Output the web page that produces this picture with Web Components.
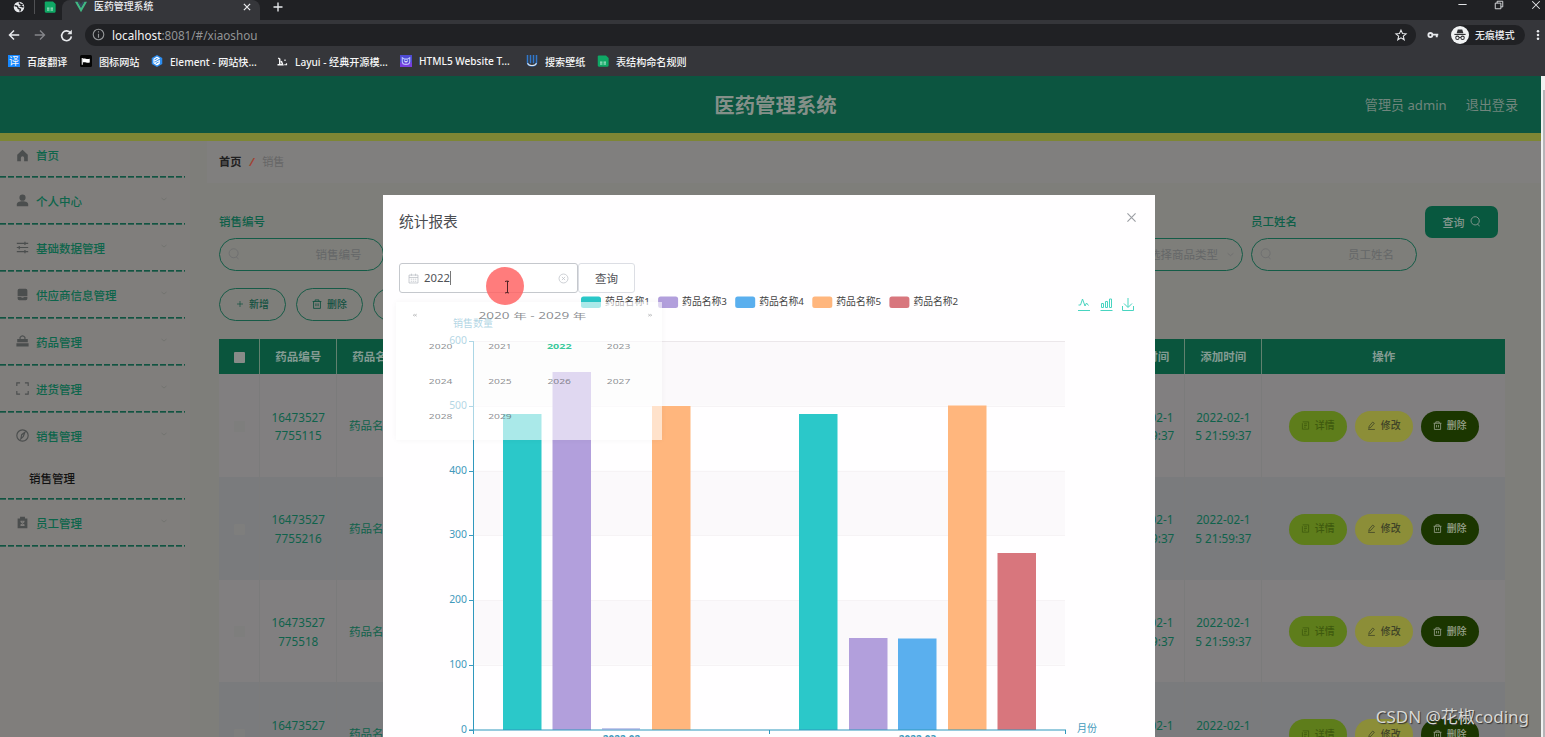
<!DOCTYPE html>
<html lang="zh-CN">
<head>
<meta charset="utf-8">
<title>医药管理系统</title>
<style>
html,body{margin:0;height:100%;overflow:hidden}
body{font-family:"Noto Sans","Noto Sans CJK SC",sans-serif;font-size:11.5px;background:#7f7e7c}
</style>
</head>
<body>
<med-screen></med-screen>
<script>
const define=(name,css,html)=>customElements.define(name,class extends HTMLElement{
  constructor(){
    super();
    const root=this.attachShadow({mode:'open'});
    root.innerHTML='<style>*{box-sizing:border-box}'+css+'</style>'+(typeof html==='function'?html(this):html);
  }
});
const ICONS={
  globe:'<circle cx="8" cy="8" r="7" fill="#e8eaed" stroke="none"/><path d="M2 6l4 1 1 3 3 1-1 3M8 2l1 2 3 1-2 2 4 1" stroke="#202124" stroke-width="1.800" fill="none"/>',
  sheet:'<path d="M1 2q0-1.500 1.500-1.500H12L15.500 4v10q0 1.500-1.500 1.500H2.500Q1 15.500 1 14z" fill="#0fa865" stroke="none"/><path d="M4 9.500h3.300M8.700 9.500H12M4 12h3.300M8.700 12H12" stroke="#d8f5e6" stroke-width="1.200"/>',
  vue:'<path d="M0 1h3.4L8 9l4.600-8H16L8 15z" fill="#41b883" stroke="none"/><path d="M3.400 1H6l2 3.500L10 1h2.600L8 9z" fill="#35495e" stroke="none"/>',
  close:'<path d="M3 3l10 10M13 3L3 13"/>',
  plus:'<path d="M8 2v12M2 8h12"/>',
  back:'<path d="M15 8H2M8 2L2 8l6 6" stroke-width="2"/>',
  forward:'<path d="M1 8h13M8 2l6 6-6 6" stroke-width="1.800"/>',
  reload:'<path d="M13 5a6 6 0 1 0 1 4" stroke-width="2"/><path d="M14.500 1v5.500H9z" fill="currentColor" stroke="none"/>',
  info:'<circle cx="8" cy="8" r="6.500"/><path d="M8 7v5M8 4v1.500"/>',
  star:'<path d="M8 1.500l2 4.500 4.800.4-3.700 3.200 1.200 4.800L8 11.800l-4.300 2.600 1.200-4.800L1.200 6.400 6 6z"/>',
  key:'<circle cx="4.500" cy="8" r="2.700" stroke-width="2.400"/><path d="M7 7.500h8M13 8v3" stroke-width="2.600"/>',
  incognito:'<circle cx="8" cy="8" r="8" fill="#f1f3f4" stroke="none"/><path d="M5 6.500l1-3.500h4l1 3.500z" fill="#303134" stroke="none"/><path d="M3 7.500h10" stroke="#303134" stroke-width="1"/><circle cx="5.700" cy="10.500" r="1.500" stroke="#303134" stroke-width=".9"/><circle cx="10.300" cy="10.500" r="1.500" stroke="#303134" stroke-width=".9"/><path d="M7.200 10.200h1.600" stroke="#303134" stroke-width=".9"/>',
  more:'<g fill="currentColor" stroke="none"><circle cx="8" cy="3" r="1.700"/><circle cx="8" cy="8" r="1.700"/><circle cx="8" cy="13" r="1.700"/></g>',
  minus:'<path d="M2 8h12"/>',
  restore:'<path d="M2 5h9v9H2zM5 5V2h9v9h-3"/>',
  flag:'<rect width="16" height="16" rx="2" fill="#050505" stroke="none"/><path d="M3 4v9" stroke="#fff"/><path d="M3.500 5c3-1.500 5 1.500 9.500 0v5c-4 1.500-6-1.500-9.500 0z" fill="#fff" stroke="none"/>',
  element:'<path d="M8 0l7 4v8l-7 4-7-4V4z" fill="#2c8df0" stroke="none"/><path d="M11.500 5L8 3 4 5.500v5L8 13l3.500-2M5 8l5-3M5.500 10.500L11 7.500v3L8 12" stroke="#fff" stroke-width="1.500"/>',
  layui:'<path d="M2 13h3V5.500L3 4M6 13h3L7 8" stroke-width="2"/><path d="M12 6v2M11 13h3v-2" stroke-width="1.600"/>',
  html5:'<rect width="16" height="16" fill="#4e4bd5" stroke="none"/><rect y="10" width="16" height="6" fill="#783fe0" stroke="none"/><path d="M3 3.500v5c0 3 2 4 5 4s5-1 5-4v-5l-3 2H6z" stroke="#bbc6ff"/><path d="M5.500 7.500l2.500 2 2.500-2" stroke="#e5eaff"/>',
  wall:'<path d="M2 0v10c0 6 12 6 12 0V0M6 0v11M10 0v11" stroke="#3178cb" stroke-width="2"/><path d="M2 11c2 4 10 4 12 0" stroke="#dce5ef" stroke-width="1.500"/>',
  home:'<path d="M8 1L1.500 7v8H6v-4a2 2 0 0 1 4 0v4h4.500V7z" fill="currentColor" stroke="none"/>',
  user:'<circle cx="8" cy="4.500" r="3.800" fill="currentColor" stroke="none"/><path d="M1 15v-2c0-3 3-4 7-4s7 1 7 4v2z" fill="currentColor" stroke="none"/>',
  list:'<path d="M1 3h14M1 8h14M1 13h14M11 1v4M4 6v4M11 11v4" stroke-width="1.500"/>',
  box:'<path d="M2 3a2 2 0 0 1 2-2h8a2 2 0 0 1 2 2v7H2zM2 11h4q2 2 4 0h4v2a2 2 0 0 1-2 2H4a2 2 0 0 1-2-2z" fill="currentColor" stroke="none"/>',
  case:'<path d="M5 5V3q3-4 6 0v2"/><path d="M1.500 5h13v4h-13zM.5 10h15v4H.5z" fill="currentColor" stroke="none"/>',
  full:'<path d="M1 5V1h4M11 1h4v4M15 11v4h-4M5 15H1v-4"/>',
  compass:'<circle cx="8" cy="8" r="7"/><path d="M11 4L9 9l-3 3 1-5z"/>',
  clip:'<path d="M2 3h3V1h6v2h3v12H2z" fill="currentColor" stroke="none"/><path d="M5.500 6.500h5M5.500 11.500h5M6 7l4 4M10 7l-4 4" stroke="#807e7c"/>',
  down:'<path d="M3 6l5 4 5-4"/>',
  search:'<circle cx="7.500" cy="7" r="6"/><path d="M11 12l3 2.500"/>',
  trash:'<path d="M1 4h14M5 4V1.500h6V4M2.500 4v11h11V4M6.300 7v4.500M9.700 7v4.500"/>',
  edit:'<path d="M4 9l6-7 3 2-6 7-4 2zM2 15h12"/>',
  doc:'<path d="M3 1.500h10.500v13H2.500V4M5.500 5h5M5.500 8h5M5.500 11h3"/>',
  cal:'<path d="M1.500 3h13v11.500h-13zM1.500 6.500h13M5 1v3M11 1v3M4 9h2M7 9h2M10 9h2M4 12h2M7 12h2M10 12h2"/>',
  clear:'<circle cx="8" cy="8" r="6.500"/><path d="M5.700 5.700l4.600 4.600M10.300 5.700l-4.600 4.600"/>',
  prev:'<path d="M8 3L3 8l5 5M13 3L8 8l5 5"/>',
  next:'<path d="M8 3l5 5-5 5M3 3l5 5-5 5"/>'
};
const icon=(n,s=12,st='',w=1.4)=>`<ui-icon name="${n}" weight="${w}" style="width:${s}px;height:${s}px;${st}"></ui-icon>`;
define('ui-icon',':host{display:inline-block;flex:none}svg{display:block;width:100%;height:100%;overflow:visible}',
  el=>`<svg viewBox="0 0 16 16" fill="none" stroke="currentColor" stroke-width="${el.getAttribute('weight')||1.4}">${ICONS[el.getAttribute('name')]}</svg>`);

/* Browser frame */
define('book-mark',':host{display:flex;align-items:center;white-space:nowrap;color:#f6f6f7;font-size:10.1px;font-weight:500}::slotted(*){margin-right:7px}','<slot name="icon"></slot><slot></slot>');
define('browser-frame',`
:host{display:flex;flex-direction:column;height:76px;background:#35363a;color:#e8eaed}
.tabs{height:20px;background:#202124;display:flex;overflow:hidden}
.pins{width:62px;display:flex;align-items:center;padding:0 0 7px 13px}
.sep{width:1px;height:15px;background:#505154;margin:0 9px 0 9px}
.tab{width:198px;background:#35363a;border-radius:8px 8px 0 0;display:flex;align-items:center;padding:0 8px 6px 13px;font-size:9.900px;font-weight:500;white-space:nowrap}
.tab span{margin:0 auto 0 7px;position:relative;top:-1px}
.wins{margin-left:auto;display:flex;gap:26px;padding:0 3px 11px 0;align-items:center}
.bar{height:30px;display:flex;align-items:center}
.url{width:1331px;height:22px;margin-left:13px;border-radius:11px;background:#202124;display:flex;align-items:center;padding:0 9px 1px 7px;font-size:11.700px;color:#929496}
.url b{font-weight:400;color:#f4f4f5}
.pill{height:20px;width:74px;border-radius:10px;background:#202124;margin-left:12px;display:flex;align-items:center;font-size:9.900px;font-weight:500;white-space:nowrap}
.marks{height:22px;display:grid;grid-template-columns:72px 71px 125px 124px 126px 71px 100px;padding-left:8px;align-items:center}
`,()=>`<div class="tabs"><div class="pins">${icon('globe',12)}<i class="sep"></i>${icon('sheet',12)}</div><div class="tab">${icon('vue',12)}<span>医药管理系统</span>${icon('close',10,'',2)}</div>${icon('plus',12,'margin:1px 0 0 12px',1.8)}<div class="wins">${icon('minus',11)}${icon('restore',10)}${icon('close',12)}</div></div>
<div class="bar">${icon('back',12,'margin-left:8px')}${icon('forward',12,'margin-left:14px;color:#85868a')}${icon('reload',13,'margin-left:14px')}<div class="url" style="margin-left:12px">${icon('info',13,'margin-right:7px')}<b>localhost</b>:8081/#/xiaoshou${icon('star',12,'margin-left:auto;color:#e8eaed')}</div>${icon('key',12,'margin-left:11px')}<div class="pill">${icon('incognito',18,'margin-right:6px')}无痕模式</div>${icon('more',12,'margin-left:7px')}</div>
<div class="marks"><book-mark><i slot="icon" style="width:12px;height:12px;background:#1687ff;font:10px/12px 'Noto Sans CJK SC',sans-serif;text-align:center;display:block">译</i>百度翻译</book-mark>
${[['flag','图标网站'],['element','Element - 网站快...'],['layui','Layui - 经典开源模...'],['html5','HTML5 Website T...'],['wall','搜索壁纸'],['sheet','表结构命名规则']].map(([i,t])=>`<book-mark><ui-icon slot="icon" name="${i}" style="width:12px;height:12px"></ui-icon>${t}</book-mark>`).join('')}</div>`);

/* Site header */
define('site-header',`
:host{display:grid;grid-template-columns:1fr 1fr 1fr;align-items:center;height:65px;background:#0c5540;border-bottom:8px solid #7e8634;color:#71857d;padding-right:23px}
h1{grid-column:2;margin:0;padding-left:33px;font-size:20.400px;line-height:30px;text-align:center;font-weight:700;color:#859089;white-space:nowrap}
div{display:flex;justify-content:flex-end;gap:19px;font-size:13.100px}`,
'<h1>医药管理系统</h1><div><span>管理员 admin</span><span>退出登录</span></div>');

/* Sidebar */
define('nav-item',`
:host{display:block;width:185px;background-image:repeating-linear-gradient(90deg,#125442 0 6px,transparent 6px 8px);background-size:100% 1.700px;background-repeat:no-repeat;background-position:0 100%}
.row{height:47px;display:flex;align-items:center;padding:0 17px 2px 16px;color:#0d654b;white-space:nowrap;font-weight:500}
:host([first]) .row{height:37px;padding-bottom:9px}
.row span{margin:0 auto 0 7px}
.sub{height:40px;padding:10px 0 0 29px;line-height:18px;color:#111;font-weight:500}`,
el=>`<div class="row">${icon(el.getAttribute('icon'),13,'color:#4b4e4e')}<span>${el.getAttribute('label')}</span>${el.hasAttribute('first')?'':icon('down',8,'color:#666b67;margin-top:-3px',1.1)}</div>${el.getAttribute('sub')?`<div class="sub">${el.getAttribute('sub')}</div>`:''}`);
define('side-nav',':host{display:block;width:190px;background:#807e7c}',()=>[['home','首页'],['user','个人中心'],['list','基础数据管理'],['box','供应商信息管理'],['case','药品管理'],['full','进货管理'],['compass','销售管理','销售管理'],['clip','员工管理']].map(([i,l,s],k)=>`<nav-item icon="${i}" label="${l}" ${s?`sub="${s}"`:''} ${k?'':'first'}></nav-item>`).join(''));

/* Search */
define('search-field',`
:host{display:block;width:165px;color:#0d5f48;white-space:nowrap}
label{display:block;height:32px;line-height:32px;font-weight:500}
.box{height:33px;border:1px solid #145c47;border-radius:17px;display:flex;align-items:center;padding:0 7px 1px 8px;color:#656768}
.box ui-icon{color:#6c6d6e}
.box span{flex:1;text-align:center;padding-left:61px}`,
el=>`<label>${el.getAttribute('label')}</label><div class="box">${el.hasAttribute('select')?'':icon('search',12,'',1.1)}<span style="${el.hasAttribute('select')?'text-align:right;padding:0 8px 0 0':''}">${el.getAttribute('hint')}</span>${el.hasAttribute('select')?icon('down',9):''}</div>`);
define('pill-button',`
:host{display:flex;align-items:center;justify-content:center;gap:5px;width:67px;height:33px;border:1px solid #175b47;border-radius:17px;color:#10503f;font-size:9.900px;font-weight:500;white-space:nowrap;padding-bottom:1px}
:host([kind=view]),:host([kind=edit]),:host([kind=del]){width:58px;height:31px;border:0}
:host([kind=view]){background:#5e7d1b;color:#3e5a0e}
:host([kind=edit]){background:#8c8e38;color:#3e4327}
:host([kind=del]){background:#1b3600;color:#9ba58f}
:host([kind=query]){width:73px;height:32px;border:0;border-radius:7px;background:#08583f;color:#84968e;font-size:11px}`,'<slot></slot>');

/* Table */
define('sales-table',`
:host{display:block;width:1286px}
.r{display:grid;grid-template-columns:41.200px repeat(13,77.100px) 242.500px;height:102.800px;background:#7a7b7d;color:#0f624b;text-align:center;line-height:18.800px}
.r>div{display:flex;align-items:center;justify-content:center;border-right:1px solid #7b7b7b;padding-top:2px;white-space:nowrap}
.r.odd{background:#817f80}
.r.h{height:35px;background:#0a553d;color:#849b93;font-weight:700}
.r.h>div{border-color:#61816f}
.r>div:last-child{border:0;gap:8px}
.n{font-size:11.700px}
.r i{width:11px;height:11px;background:#7e7e7d;border-radius:1px}.h i{background:#878b88}
`,()=>{
  const time='<div class="n">2022-02-1<br>5 21:59:37</div>';
  const row=([b,name],k)=>`<div class="r ${k%2?'':'odd'}"><div><i></i></div><div class="n">16473527<br>${b}</div><div>${name}</div>${'<div></div>'.repeat(9)}${time}${time}<div></div></div>`
    .replace(/<div><\/div><\/div>$/,`<div><pill-button kind="view">${icon('doc',9)}详情</pill-button><pill-button kind="edit">${icon('edit',9)}修改</pill-button><pill-button kind="del">${icon('trash',9)}删除</pill-button></div></div>`)
    .replace('<div></div>','<div></div><div></div>');
  return `<div class="r h"><div><i></i></div><div>药品编号</div><div>药品名称</div>${'<div></div>'.repeat(9)}<div></div><div>销售时间</div><div>添加时间</div><div>操作</div></div>`.replace('<div></div><div>销售时间','<div>销售时间')
  .replace('<div>药品名称</div>','<div>药品名称</div>')
  .replace('<div>销售时间','<div>销售时间')
  .replace(/(<div><\/div>){9}/,'<div></div>'.repeat(9))
  + [['7755115','药品名称1'],['7755216','药品名称3'],['775518','药品名称5'],['7755118','药品名称2']].map(row).join('').replace(/(<div><\/div>){10}/g,'<div></div>'.repeat(9));
});
define('sales-page',`
:host{display:block;flex:1;padding:0 0 0 29px;background:#7e7e7a}
.crumb{height:42px;display:flex;align-items:center;gap:8px;background:#807f7e;margin-left:-12px;padding:0 0 2px 12px;font-size:11.200px;color:#666}
.crumb b{color:#202020}.crumb em{color:#a04332;font-weight:700}
.search{display:grid;grid-template-columns:repeat(7,172px) 1fr;padding-top:23px}
.acts{display:flex;gap:10px;padding:17px 0 18px}`,
()=>`<div class="crumb"><b>首页</b><em>/</em><span>销售</span></div>
<div class="search"><search-field label="销售编号" hint="销售编号"></search-field><i></i><i></i><i></i><i></i><search-field label="商品类型" hint="请选择商品类型" select style="width:164px"></search-field><search-field label="员工姓名" hint="员工姓名" style="width:166px"></search-field><pill-button kind="query" style="margin-left:2px">查询 ${icon('search',11)}</pill-button></div>
<div class="acts"><pill-button>${icon('plus',8)}新增</pill-button><pill-button>${icon('trash',10)}删除</pill-button><pill-button></pill-button></div>
<sales-table></sales-table>`);

/* Statistics chart */
define('bar-chart',':host{display:block}svg{display:block;font-family:inherit}',()=>{
  const y=v=>729.5-v*0.6475;
  let s='';
  [500,300,100].forEach(v=>s+=`<rect x="474" y="${y(v+100)}" width="591" height="64.7" fill="#fbf9fb"/>`);
  for(let v=100;v<=600;v+=100)s+=`<path d="M474 ${Math.round(y(v))+.5}H1065" stroke="${v===600?'#ebe7ea':'#f6f3f5'}"/>`;
  [[503,414,'#2bc8c9'],[552.5,372,'#b29fdc'],[652,406,'#ffb67d'],[799,414,'#2bc8c9'],[849,638,'#b29fdc'],[898,638.5,'#5aafee'],[948,405.5,'#ffb67d'],[997.5,553,'#d8767d']].forEach(([x,t,c])=>s+=`<rect x="${x}" y="${t}" width="38.500" height="${730-t}" fill="${c}"/>`);
  s+='<path d="M473.500 341V734M769.500 730v4M1065.500 730v4M469 730H1066" stroke="#2f98bd" fill="none"/><path d="M602 729h38" stroke="#8895d8"/>';
  for(let v=0;v<=600;v+=100){const q=y(v);s+=`<path d="M469 ${Math.round(q)+.5}h5" stroke="#3b9bc0"/><text x="467" y="${q+3}" text-anchor="end" font-size="10.400">${v}</text>`}
  s+='<text x="453" y="327" font-size="10">销售数量</text><text x="1077" y="732" font-size="10">月份</text><g font-size="10" font-weight="700" text-anchor="middle"><text x="621.500" y="743">2022-02</text><text x="917.500" y="743">2022-03</text></g>';
  [['药品名称1','#2bc8c9'],['药品名称3','#b29fdc'],['药品名称4','#5aafee'],['药品名称5','#ffb67d'],['药品名称2','#d8767d']].forEach(([t,c],i)=>s+=`<rect x="${581+i*77.1}" y="296.500" width="20" height="11.500" rx="2.500" fill="${c}"/><text x="${605+i*77.1}" y="304.500" font-size="9.800" fill="#444">${t}</text>`);
  s+='<g stroke="#48d4c0" fill="none"><path d="M1078.500 305h2l2-6 2.500 7 1.500-3 2 2.500M1078 310.500h12"/><path d="M1101.500 303.500h2v4h-2zM1105.500 301.500h2v6h-2zM1109.500 299h2v8.500h-2zM1100.500 310.500h12"/><path d="M1128 298v9M1124 303.500l4 4 4-4M1122.500 306v4.500h11V306"/></g>';
  return `<svg width="772" height="541" viewBox="383 196 772 541" fill="#4299bb">${s}</svg>`;
});
define('year-panel',`
:host{display:block;width:266px;height:138px;background:rgba(255,255,255,.6);box-shadow:0 0 6px rgba(0,0,0,.04);color:rgba(70,72,78,.62)}
.in{width:266px;height:230px;transform:scaleY(.6);transform-origin:0 0}
.t{display:flex;align-items:center;justify-content:space-between;height:43px;padding:0 9px 0 16px;font-size:13.600px}
.g{display:grid;grid-template-columns:repeat(4,59.300px);grid-auto-rows:58.500px;padding-left:15px;text-align:center;line-height:63px;font-size:10.300px}
.on{font-weight:700;color:#3bc99b;font-size:10.800px}`,
()=>`<div class="in"><div class="t">${icon('prev',6)}<span>2020 年 - 2029 年</span>${icon('next',6)}</div><div class="g">${Array.from({length:10},(_,i)=>`<span class="${i===2?'on':''}">${2020+i}</span>`).join('')}</div></div>`);
define('stats-dialog',`
:host{display:block;width:772px;height:542px;background:#fffeff;overflow:hidden}
header{display:flex;justify-content:space-between;align-items:center;padding:12px 17px 0 16px;height:38px;font-size:14.700px;color:#4a4c51}
.f{display:flex;padding:30px 0 0 16px;font-size:11.500px;color:#505257}
.i{width:179px;height:30px;border:1px solid #c5c8cd;border-radius:3px;display:flex;align-items:center;padding:0 8px;background:#fff;font-size:11.300px}
.i b{font-weight:400;margin:0 auto 0 5px;border-right:1px solid #777;line-height:14px}
.b{width:57px;height:30px;border:1px solid #dcdee4;border-radius:3px;display:flex;align-items:center;justify-content:center;background:#fff}
header,.f{position:relative}
bar-chart,year-panel,.cur{position:absolute}
bar-chart{left:0;top:1px}year-panel{left:13px;top:107px}
.cur{left:102.500px;top:71.500px;width:38px;height:38px;border-radius:50%;background:rgba(255,99,99,.84)}
.cur svg{display:block}`,
()=>`<bar-chart></bar-chart><header><span>统计报表</span>${icon('close',13,'color:#9b9ea3;margin-top:-5px')}</header><div class="f"><div class="i">${icon('cal',11,'color:#b9bcc3',1.1)}<b>2022</b>${icon('clear',11,'color:#bcc0c7',1.1)}</div><div class="b">查询</div></div><year-panel></year-panel><div class="cur"><svg width="38" height="38" fill="none" stroke="#502224"><path d="M19 14.500l2-.5 2 .5M21.500 14v11.500M19 26l2-.5 2 .5"/></svg></div>`);

define('med-screen',`
:host{display:flex;flex-direction:column;width:1545px;height:737px;overflow:hidden;position:relative}
.page{height:661px;display:flex}
.site{width:1541px;overflow:hidden}
.main{display:flex;height:800px}
.scroll{width:4px;background:#f1f1f1;padding-top:14px}
.scroll div{height:100%;width:2px;margin-left:2px;background:#b5b5b8}
stats-dialog{position:absolute;left:383px;top:195px}
.wm{position:absolute;right:16px;bottom:9px;font:17px/22px "Noto Sans","Noto Sans CJK SC",sans-serif;color:#d8d8d5;text-shadow:1px 1px 1px #333;white-space:nowrap}`,
`<browser-frame></browser-frame><div class="page"><div class="site"><site-header></site-header><div class="main"><side-nav></side-nav><sales-page></sales-page></div></div><div class="scroll"><div></div></div></div><stats-dialog></stats-dialog><div class="wm">CSDN @花椒coding</div>`);
</script>
</body>
</html>
